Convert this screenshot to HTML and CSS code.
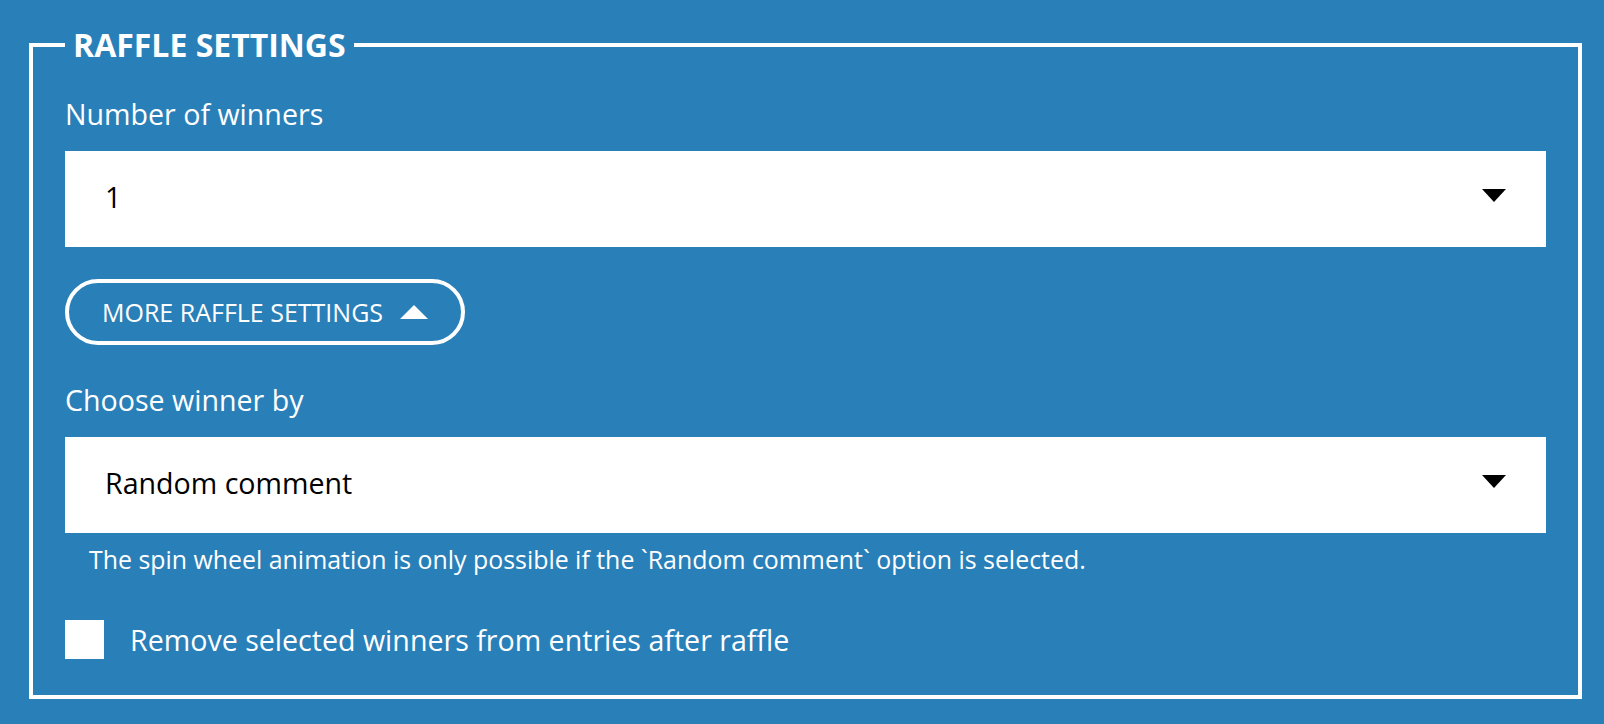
FILE: index.html
```html
<!DOCTYPE html>
<html lang="en">
<head>
<meta charset="utf-8">
<title>Raffle settings</title>
<link rel="stylesheet" href="styles.css">
</head>
<body>
<div class="page">
  <fieldset class="raffle">
    <legend class="raffle__title">RAFFLE SETTINGS</legend>
    <div class="raffle__body">
      <div class="field-label">Number of winners</div>
      <div class="select">
        <span class="select__value">1</span>
        <span class="select__arrow"></span>
      </div>
      <button class="more-btn" type="button">
        <span>MORE RAFFLE SETTINGS</span>
        <span class="more-btn__tri"></span>
      </button>
      <div class="field-label field-label--second">Choose winner by</div>
      <div class="select">
        <span class="select__value">Random comment</span>
        <span class="select__arrow"></span>
      </div>
      <p class="hint">The spin wheel animation is only possible if the `Random comment` option is selected.</p>
      <label class="check">
        <span class="check__box"></span>
        <span class="check__text">Remove selected winners from entries after raffle</span>
      </label>
    </div>
  </fieldset>
</div>
</body>
</html>
```
FILE: styles.css
```css
html, body {
  margin: 0;
  padding: 0;
}
body {
  background: #2980b9;
  font-family: "Open Sans", "Noto Sans", sans-serif;
  color: #fff;
}
.page {
  padding: 25px 22px 0 29px;
}
.raffle {
  margin: 0;
  border: 4px solid #fff;
  padding: 30px 32px 36px 32px;
  min-width: 0;
}
.raffle__title {
  padding: 0 8px;
  font-weight: 700;
  font-size: 32px;
  line-height: 40px;
  color: #fff;
}
.raffle__body {
  display: flex;
  flex-direction: column;
  align-items: stretch;
}
.field-label {
  font-size: 28.6px;
  line-height: 38px;
  margin-bottom: 18px;
}
.field-label--second {
  margin-top: 36px;
}
.select {
  height: 96px;
  box-sizing: border-box;
  background: #fff;
  color: #000;
  display: flex;
  align-items: center;
  justify-content: space-between;
  padding: 0 40px 4px 40px;
  font-size: 28.6px;
  line-height: 34px;
}
.select__arrow {
  width: 0;
  height: 0;
  border-left: 12px solid transparent;
  border-right: 12px solid transparent;
  border-top: 13px solid #000;
  margin-bottom: 4px;
}
.more-btn {
  align-self: flex-start;
  margin-top: 32px;
  height: 66px;
  box-sizing: border-box;
  border: 4px solid #fff;
  border-radius: 33px;
  background: transparent;
  color: #fff;
  font-family: inherit;
  font-size: 25px;
  line-height: 30px;
  padding: 0 33px 0 33px;
  display: flex;
  align-items: center;
  gap: 17px;
  cursor: pointer;
}
.more-btn__tri {
  width: 0;
  height: 0;
  border-left: 14px solid transparent;
  border-right: 14px solid transparent;
  border-bottom: 14px solid #fff;
}
.hint {
  margin: 11px 0 0 0;
  padding-left: 24px;
  font-size: 24.9px;
  line-height: 30px;
}
.check {
  margin-top: 46px;
  display: flex;
  align-items: center;
  gap: 26px;
  font-size: 28.6px;
  line-height: 38px;
}
.check__box {
  width: 39px;
  height: 39px;
  background: #fff;
  flex: none;
}
```
